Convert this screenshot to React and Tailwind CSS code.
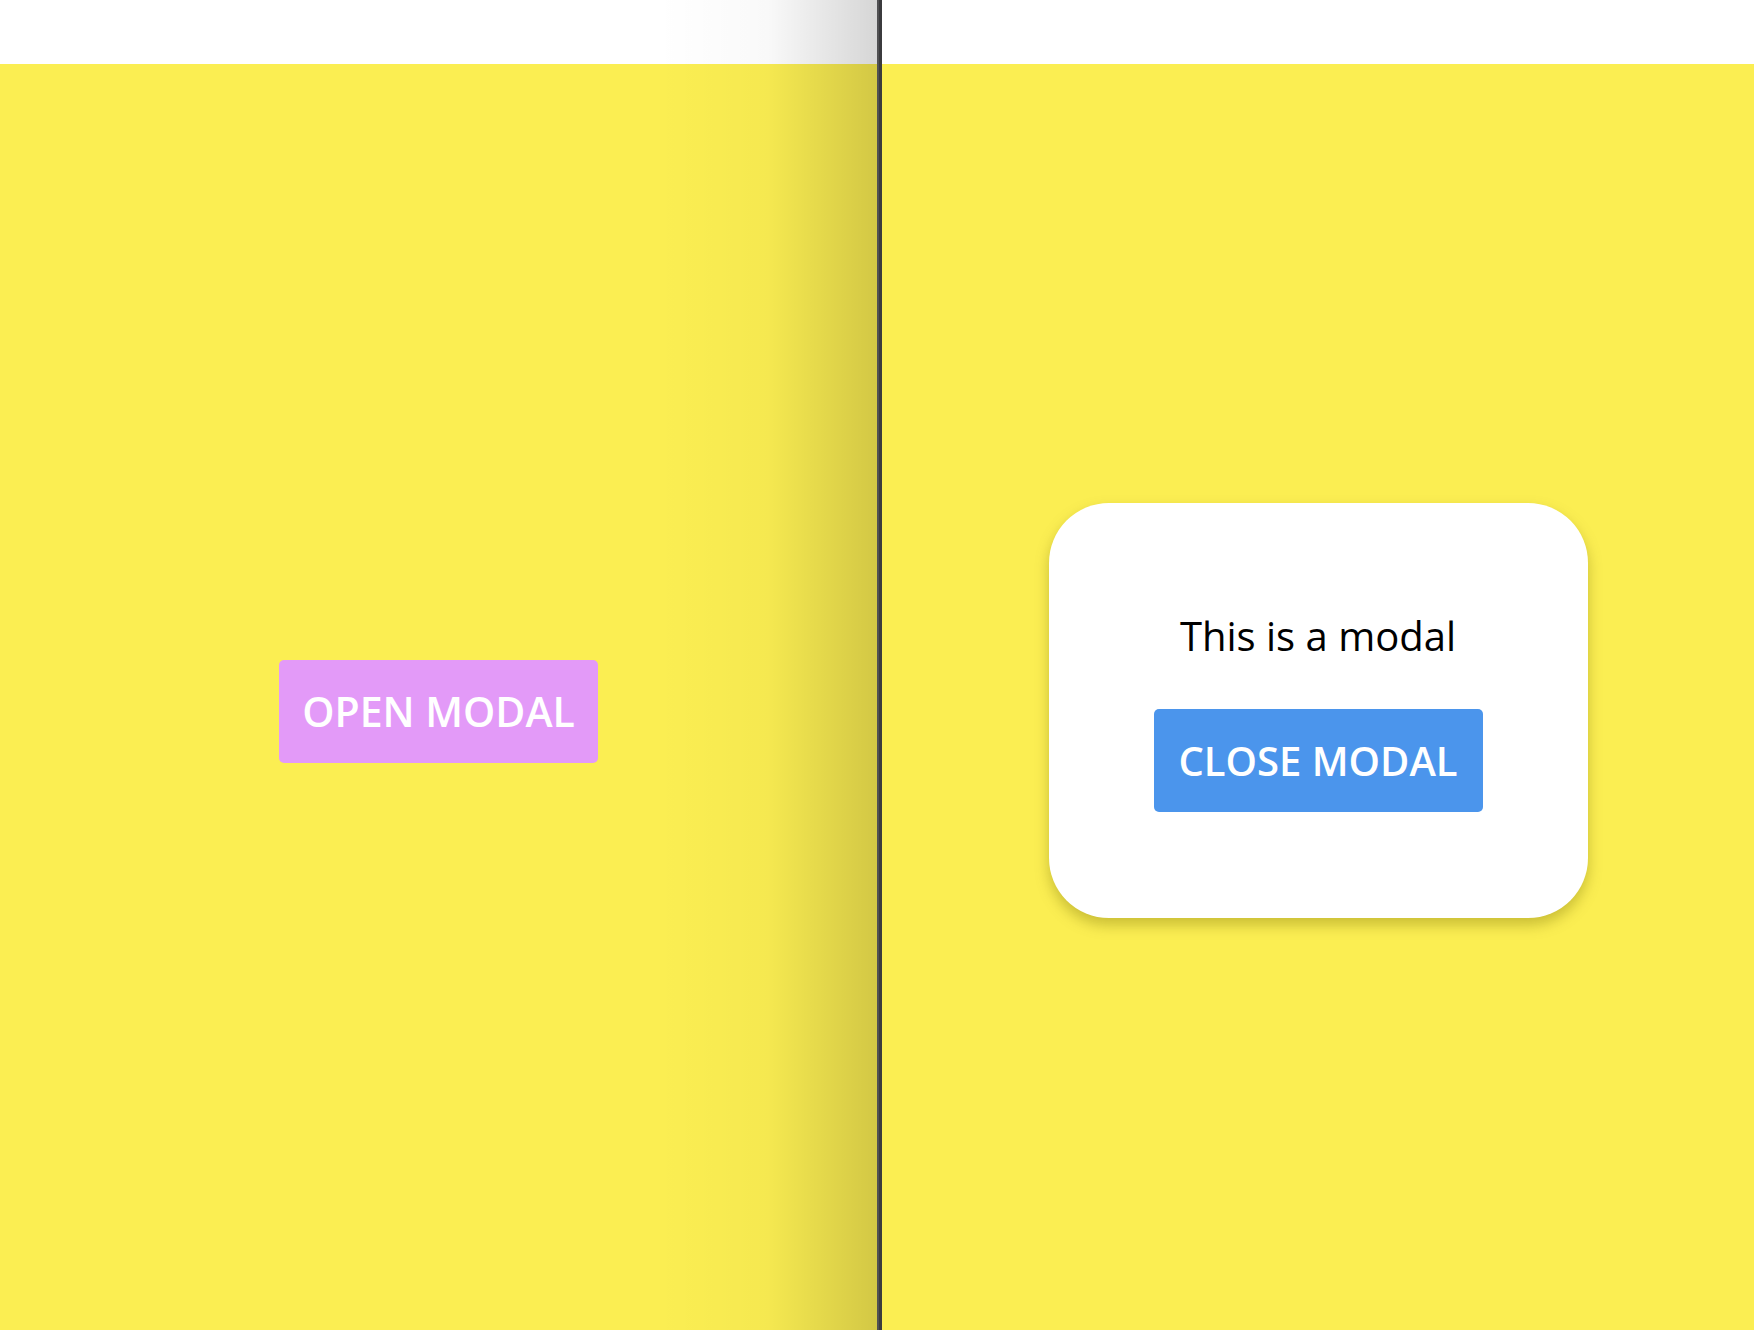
import React, { useState } from "react";

const sans = "font-['Open_Sans','Noto_Sans',sans-serif]";

function ModalPanel({ open, onOpen, onClose }) {
  return (
    <div className="flex-1 h-full flex flex-col">
      <div className="h-16 bg-white" />
      <div className="flex-1 bg-[#fbee52] flex items-start justify-center pt-[439px]">
        {open ? (
          <div className="w-[539px] h-[415px] bg-white rounded-[60px] shadow-[0_7px_14px_rgba(110,100,0,0.35)] flex flex-col items-center pt-[113px]">
            <p className={`${sans} text-[40px] leading-none text-black`}>This is a modal</p>
            <button
              onClick={onClose}
              className={`${sans} mt-[53px] w-[329px] h-[103px] rounded-[5px] bg-[#4b95ec] text-white text-[40px] font-semibold`}
            >
              CLOSE MODAL
            </button>
          </div>
        ) : (
          <button
            onClick={onOpen}
            className={`${sans} mt-[157px] w-[319px] h-[103px] rounded-[5px] bg-[#e39af8] text-white text-[41px] font-semibold`}
          >
            OPEN MODAL
          </button>
        )}
      </div>
    </div>
  );
}

export default function App() {
  const [leftOpen, setLeftOpen] = useState(false);
  const [rightOpen, setRightOpen] = useState(true);

  return (
    <div className="w-[1754px] h-[1330px] flex overflow-hidden">
      <div className="relative w-[877px] h-full flex">
        <ModalPanel open={leftOpen} onOpen={() => setLeftOpen(true)} onClose={() => setLeftOpen(false)} />
        {/* window edge shadow */}
        <div className="absolute right-0 top-0 h-full w-[220px] pointer-events-none bg-gradient-to-r from-transparent via-[rgba(0,0,0,0.025)] to-[rgba(0,0,0,0.16)]" />
      </div>
      <div className="w-[5px] h-full bg-[#3b3b3d] border-l-2 border-[#515153]" />
      <div className="flex-1 h-full flex">
        <ModalPanel open={rightOpen} onOpen={() => setRightOpen(true)} onClose={() => setRightOpen(false)} />
      </div>
    </div>
  );
}
